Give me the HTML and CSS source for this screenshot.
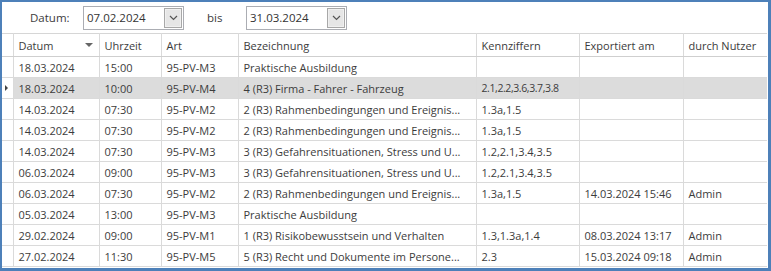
FILE: index.html
```html
<!DOCTYPE html>
<html lang="de">
<head>
  <meta charset="UTF-8" />
  <title>Ausbildungsnachweise</title>
  <link rel="stylesheet" href="styles.css">
</head>
<body>
  <div class="frame">
    <div class="toolbar">
      <span class="lbl lbl-datum">Datum:</span>
      <div class="combo">
        <span class="combo-text">07.02.2024</span>
        <span class="combo-btn"><svg width="9" height="6" viewBox="0 0 9 6"><path d="M1 1 L4.5 4.5 L8 1" fill="none" stroke="#555" stroke-width="1.2"/></svg></span>
      </div>
      <span class="lbl lbl-bis">bis</span>
      <div class="combo">
        <span class="combo-text">31.03.2024</span>
        <span class="combo-btn"><svg width="9" height="6" viewBox="0 0 9 6"><path d="M1 1 L4.5 4.5 L8 1" fill="none" stroke="#555" stroke-width="1.2"/></svg></span>
      </div>
    </div>

    <table class="grid">
      <colgroup>
        <col class="c-rh"><col class="c-datum"><col class="c-zeit"><col class="c-art">
        <col class="c-bez"><col class="c-kenn"><col class="c-exp"><col class="c-user">
      </colgroup>
      <thead>
        <tr>
          <th class="rh"></th>
          <th class="sorted">Datum <span class="sort-arrow"></span></th>
          <th>Uhrzeit</th>
          <th>Art</th>
          <th>Bezeichnung</th>
          <th>Kennziffern</th>
          <th>Exportiert am</th>
          <th>durch Nutzer</th>
        </tr>
      </thead>
      <tbody>
        <tr>
          <td class="rh"></td><td>18.03.2024</td><td>15:00</td><td>95-PV-M3</td>
          <td>Praktische Ausbildung</td><td></td><td></td><td></td>
        </tr>
        <tr class="current">
          <td class="rh"><span class="marker"></span></td><td>18.03.2024</td><td>10:00</td><td>95-PV-M4</td>
          <td>4 (R3) Firma - Fahrer - Fahrzeug</td><td class="narrow">2.1,2.2,3.6,3.7,3.8</td><td></td><td></td>
        </tr>
        <tr>
          <td class="rh"></td><td>14.03.2024</td><td>07:30</td><td>95-PV-M2</td>
          <td>2 (R3) Rahmenbedingungen und Ereignis...</td><td>1.3a,1.5</td><td></td><td></td>
        </tr>
        <tr>
          <td class="rh"></td><td>14.03.2024</td><td>07:30</td><td>95-PV-M2</td>
          <td>2 (R3) Rahmenbedingungen und Ereignis...</td><td>1.3a,1.5</td><td></td><td></td>
        </tr>
        <tr>
          <td class="rh"></td><td>14.03.2024</td><td>07:30</td><td>95-PV-M3</td>
          <td>3 (R3) Gefahrensituationen, Stress und U...</td><td>1.2,2.1,3.4,3.5</td><td></td><td></td>
        </tr>
        <tr>
          <td class="rh"></td><td>06.03.2024</td><td>09:00</td><td>95-PV-M3</td>
          <td>3 (R3) Gefahrensituationen, Stress und U...</td><td>1.2,2.1,3.4,3.5</td><td></td><td></td>
        </tr>
        <tr>
          <td class="rh"></td><td>06.03.2024</td><td>07:30</td><td>95-PV-M2</td>
          <td>2 (R3) Rahmenbedingungen und Ereignis...</td><td>1.3a,1.5</td><td>14.03.2024 15:46</td><td>Admin</td>
        </tr>
        <tr>
          <td class="rh"></td><td>05.03.2024</td><td>13:00</td><td>95-PV-M3</td>
          <td>Praktische Ausbildung</td><td></td><td></td><td></td>
        </tr>
        <tr>
          <td class="rh"></td><td>29.02.2024</td><td>09:00</td><td>95-PV-M1</td>
          <td>1 (R3) Risikobewusstsein und Verhalten</td><td>1.3,1.3a,1.4</td><td>08.03.2024 13:17</td><td>Admin</td>
        </tr>
        <tr>
          <td class="rh"></td><td>27.02.2024</td><td>11:30</td><td>95-PV-M5</td>
          <td>5 (R3) Recht und Dokumente im Persone...</td><td>2.3</td><td>15.03.2024 09:18</td><td>Admin</td>
        </tr>
      </tbody>
    </table>
  </div>
</body>
</html>
```

FILE: styles.css
```css
html, body {
  margin: 0;
  padding: 0;
  background: #fff;
}
body {
  font-family: "Segoe UI", "Open Sans", "Noto Sans", sans-serif;
  font-size: 11px;
  color: #3c3c3c;
}
.frame {
  width: 771px;
  height: 271px;
  box-sizing: border-box;
  border-style: solid;
  border-color: #4d80b9;
  border-width: 2px 3px 3px 2px;
  overflow: hidden;
  background: #fff;
}

/* Filter oben */
.toolbar {
  height: 31px;
  display: flex;
  align-items: center;
  padding-left: 28px;
}
.lbl {
  font-size: 11.5px;
  flex: none;
}
.lbl-datum {
  width: 53px;
}
.lbl-bis {
  width: 62px;
  padding-left: 23px;
  box-sizing: border-box;
}
.combo {
  flex: none;
  width: 101px;
  height: 24px;
  box-sizing: border-box;
  border: 1px solid #abadb3;
  display: flex;
  align-items: center;
  justify-content: space-between;
  padding: 0 1px 0 3px;
}
.combo-text {
  font-size: 11.5px;
  color: #333;
}
.combo-btn {
  width: 18px;
  height: 20px;
  box-sizing: border-box;
  border: 1px solid #a8a8a8;
  box-shadow: inset 0 0 0 1px #f0f0f0;
  background: #e6e6e6;
  display: flex;
  align-items: center;
  justify-content: center;
}

/* Tabelle */
.grid {
  border-collapse: collapse;
  table-layout: fixed;
  width: 765px;
  border-top: 1px solid #d6d6d6;
}
.c-rh { width: 11px; }
.c-datum { width: 86px; }
.c-zeit { width: 62px; }
.c-art { width: 77px; }
.c-bez { width: 238px; }
.c-kenn { width: 103px; }
.c-exp { width: 104px; }
.c-user { width: 84px; }
.grid th,
.grid td {
  border: 1px solid #dadada;
  border-top: none;
  padding: 0 0 0 5px;
  height: 20px;
  white-space: nowrap;
  overflow: hidden;
  text-align: left;
  font-weight: normal;
}
.grid th {
  height: 22px;
  border-bottom-color: #cfcfcf;
}
.grid th:first-child,
.grid td:first-child {
  border-left: none;
  padding: 0;
}
.grid th:last-child,
.grid td:last-child {
  border-right: none;
}
.sorted {
  position: relative;
}
.sort-arrow {
  position: absolute;
  right: 6px;
  top: 9px;
  border-left: 4px solid transparent;
  border-right: 4px solid transparent;
  border-top: 4px solid #666;
}
.current td {
  background: #dcdcdc;
}
.current td.rh {
  background: #fff;
}
.marker {
  display: block;
  margin-left: 3px;
  width: 0;
  height: 0;
  border-top: 3px solid transparent;
  border-bottom: 3px solid transparent;
  border-left: 3px solid #444;
}
.narrow {
  letter-spacing: -0.4px;
  font-size: 10.5px;
}
```
